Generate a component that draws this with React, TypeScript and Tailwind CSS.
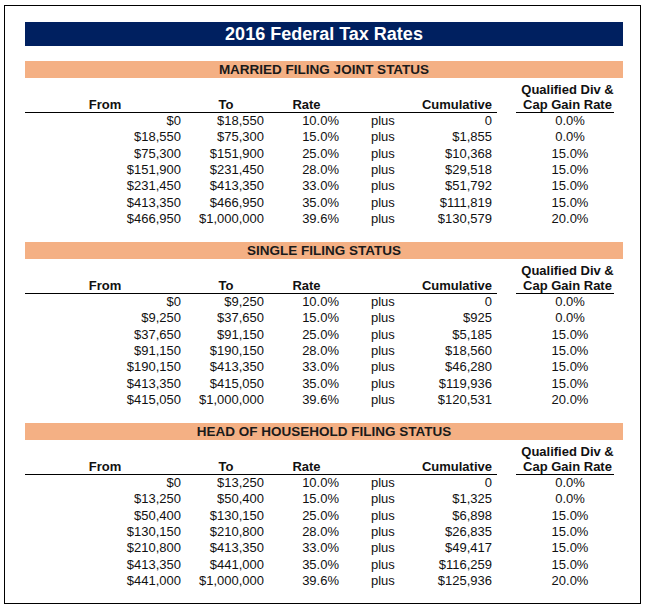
import React from 'react';

type Row = [string, string, string, string, string];

const sections: { title: string; rows: Row[] }[] = [
  {
    title: 'MARRIED FILING JOINT STATUS',
    rows: [
      ['$0', '$18,550', '10.0%', '0', '0.0%'],
      ['$18,550', '$75,300', '15.0%', '$1,855', '0.0%'],
      ['$75,300', '$151,900', '25.0%', '$10,368', '15.0%'],
      ['$151,900', '$231,450', '28.0%', '$29,518', '15.0%'],
      ['$231,450', '$413,350', '33.0%', '$51,792', '15.0%'],
      ['$413,350', '$466,950', '35.0%', '$111,819', '15.0%'],
      ['$466,950', '$1,000,000', '39.6%', '$130,579', '20.0%'],
    ],
  },
  {
    title: 'SINGLE FILING STATUS',
    rows: [
      ['$0', '$9,250', '10.0%', '0', '0.0%'],
      ['$9,250', '$37,650', '15.0%', '$925', '0.0%'],
      ['$37,650', '$91,150', '25.0%', '$5,185', '15.0%'],
      ['$91,150', '$190,150', '28.0%', '$18,560', '15.0%'],
      ['$190,150', '$413,350', '33.0%', '$46,280', '15.0%'],
      ['$413,350', '$415,050', '35.0%', '$119,936', '15.0%'],
      ['$415,050', '$1,000,000', '39.6%', '$120,531', '20.0%'],
    ],
  },
  {
    title: 'HEAD OF HOUSEHOLD FILING STATUS',
    rows: [
      ['$0', '$13,250', '10.0%', '0', '0.0%'],
      ['$13,250', '$50,400', '15.0%', '$1,325', '0.0%'],
      ['$50,400', '$130,150', '25.0%', '$6,898', '15.0%'],
      ['$130,150', '$210,800', '28.0%', '$26,835', '15.0%'],
      ['$210,800', '$413,350', '33.0%', '$49,417', '15.0%'],
      ['$413,350', '$441,000', '35.0%', '$116,259', '15.0%'],
      ['$441,000', '$1,000,000', '39.6%', '$125,936', '20.0%'],
    ],
  },
];

const cols = 'grid grid-cols-[160px_82px_78px_75px_77px_19px_98px]';

const Section: React.FC<{ title: string; rows: Row[] }> = ({ title, rows }) => (
  <div className="flex flex-col">
    <div className="h-[17px] bg-[#f4b084] text-center text-[13.5px] font-bold leading-[17px] text-[#1a1a1a]">
      {title}
    </div>
    {/* column headings */}
    <div className={`${cols} mt-[4px] items-end whitespace-nowrap text-[13px] font-bold leading-[15px] text-[#111]`}>
      <div className="border-b border-black text-center">From</div>
      <div className="border-b border-black text-center">To</div>
      <div className="border-b border-black pl-[1px] text-center">Rate</div>
      <div className="border-b border-black">&nbsp;</div>
      <div className="border-b border-black pr-[5px] text-right">Cumulative</div>
      <div />
      <div className="flex flex-col items-center border-b border-black pl-[5px]">
        <div>Qualified Div &amp;</div>
        <div>Cap Gain Rate</div>
      </div>
    </div>
    {rows.map((r, i) => (
      <div key={i} className={`${cols} h-[16.33px] whitespace-nowrap text-[13px] leading-[16.33px] text-[#111]`}>
        <div className="pr-[4px] text-right">{r[0]}</div>
        <div className="pr-[3px] text-right">{r[1]}</div>
        <div className="pr-[6px] text-right">{r[2]}</div>
        <div className="pl-[26px]">plus</div>
        <div className="pr-[5px] text-right">{r[3]}</div>
        <div />
        <div className="pl-[10px] text-center">{r[4]}</div>
      </div>
    ))}
  </div>
);

export default function App() {
  return (
    <div className="h-[609px] w-[651px] bg-white pl-[4px] pt-[5px]" style={{ fontFamily: '"Liberation Sans", Arial, sans-serif' }}>
      <div className="h-[599px] w-[637px] border border-black pl-[20px] pr-[17px] pt-[16px]">
        <div className="mb-[15px] h-[24px] bg-[#002060] text-center text-[18px] font-bold leading-[24px] text-white">
          2016 Federal Tax Rates
        </div>
        <div className="flex flex-col gap-[14.7px]">
          {sections.map((s) => (
            <Section key={s.title} title={s.title} rows={s.rows} />
          ))}
        </div>
      </div>
    </div>
  );
}
